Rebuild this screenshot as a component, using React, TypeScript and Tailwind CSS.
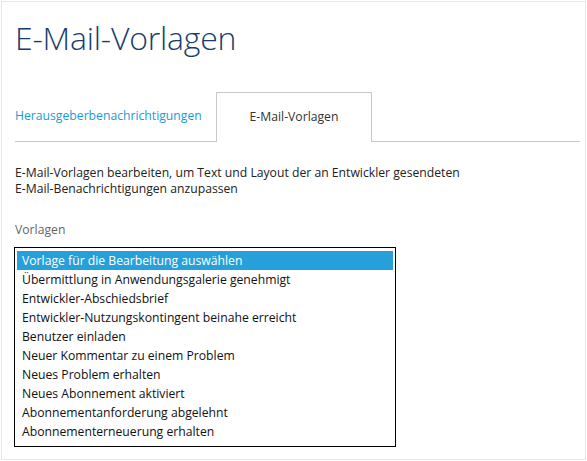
import React from 'react';

const templates = [
  'Vorlage für die Bearbeitung auswählen',
  'Übermittlung in Anwendungsgalerie genehmigt',
  'Entwickler-Abschiedsbrief',
  'Entwickler-Nutzungskontingent beinahe erreicht',
  'Benutzer einladen',
  'Neuer Kommentar zu einem Problem',
  'Neues Problem erhalten',
  'Neues Abonnement aktiviert',
  'Abonnementanforderung abgelehnt',
  'Abonnementerneuerung erhalten'
];

const font = { fontFamily: '"Segoe UI", "Open Sans", sans-serif' };

export default function App() {
  return (
    <div className="w-[587px] h-[461px] bg-white p-[1px]" style={font}>
      <div className="h-[459px] border border-[#e6e6e6] pl-[13px] pr-[5px] pt-[14px]">
        <h1 className="text-[32px] font-light leading-[44px] tracking-[-0.2px] text-[#173d6b]">E-Mail-Vorlagen</h1>

        <div className="mt-[32px] flex items-end">
          <div className="flex h-[50px] w-[201px] items-center border-b border-[#c8c8c8] text-[12.2px] text-[#1a9bd7]">
            Herausgeberbenachrichtigungen
          </div>
          <div className="flex h-[50px] w-[156px] items-center justify-center border-x border-t border-[#c8c8c8] text-[12.2px] text-[#333]">
            E-Mail-Vorlagen
          </div>
          <div className="flex-1 border-b border-[#c8c8c8]" />
        </div>

        <p className="mt-[23px] text-[12.2px] leading-[16px] text-[#222]">
          E-Mail-Vorlagen bearbeiten, um Text und Layout der an Entwickler gesendeten
          <br />
          E-Mail-Benachrichtigungen anzupassen
        </p>

        <div className="mt-[25px] text-[12.2px] leading-[16px] text-[#666]">Vorlagen</div>

        <div className="mt-[9px] -ml-[1px] h-[200px] w-[382px] border border-black px-[2px] pt-[3px]">
          {templates.map((item, index) => (
            <div
              key={item}
              className={`h-[19px] pl-[5px] text-[12.2px] leading-[19px] ${index === 0 ? 'bg-[#26a0da] text-white' : 'text-[#111]'}`}
            >
              {item}
            </div>
          ))}
        </div>
      </div>
    </div>
  );
}
